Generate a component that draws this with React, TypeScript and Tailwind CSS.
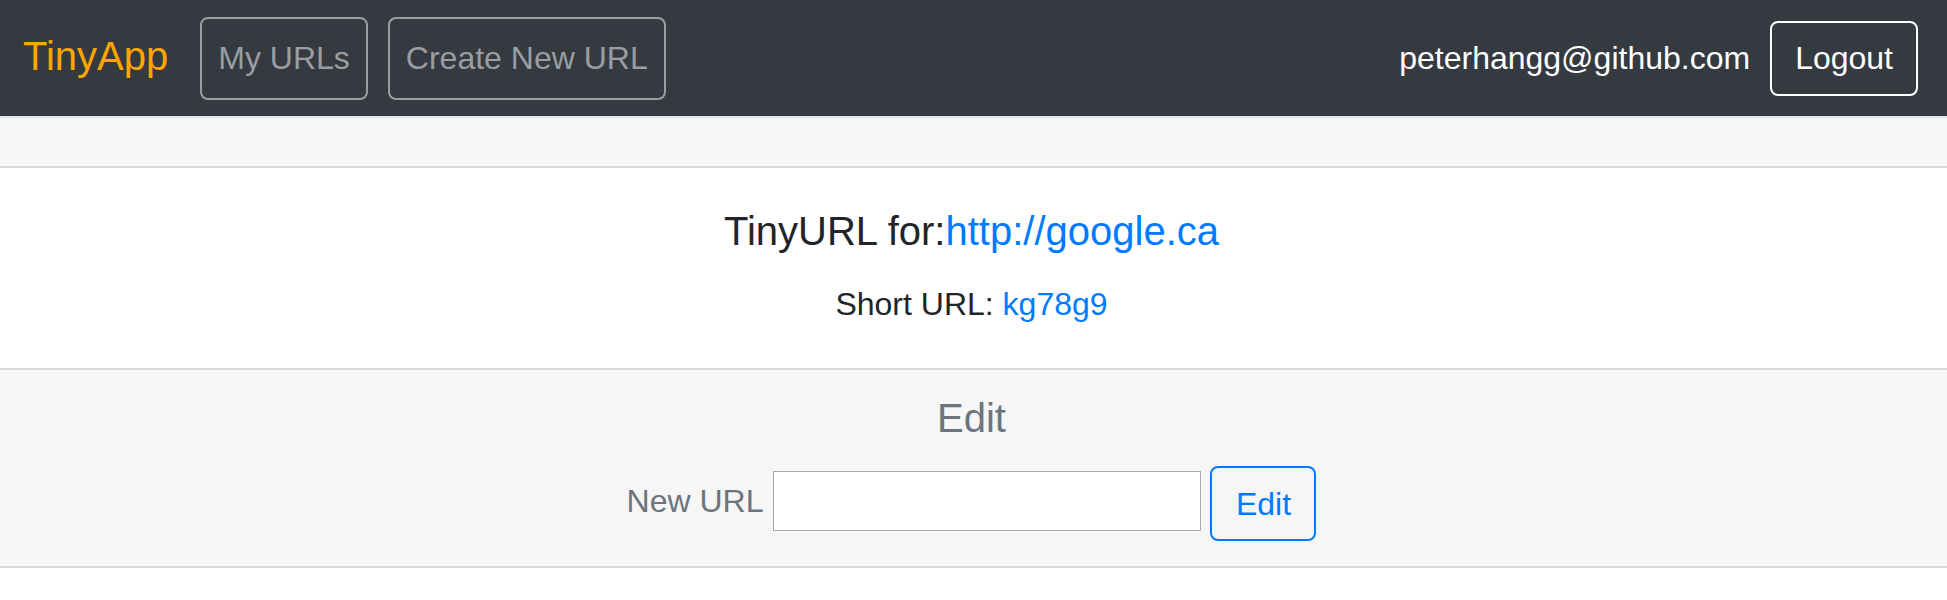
import React from 'react';

const font = { fontFamily: '"Liberation Sans", Arial, sans-serif' };

function NavBar() {
  return (
    <nav className="flex h-[116px] items-center bg-[#343a40] pl-[23px] pr-[29px]">
      <a href="#" className="mb-[5px] mr-[32px] text-[40px] leading-[60px] text-[#ffa500]">
        TinyApp
      </a>
      <div className="flex items-center gap-[20px]">
        <a
          href="#"
          className="flex h-[83px] items-center rounded-lg border-2 border-[#9a9ea2] px-4 text-[32px] leading-[48px] text-[#9a9ea3]"
        >
          My URLs
        </a>
        <a
          href="#"
          className="flex h-[83px] items-center rounded-lg border-2 border-[#9a9ea2] px-4 text-[32px] leading-[48px] text-[#9a9ea3]"
        >
          Create New URL
        </a>
      </div>
      <div className="ml-auto flex items-center gap-[20px]">
        <span className="text-[32px] leading-[48px] text-white">peterhangg@github.com</span>
        <button className="flex h-[75px] items-center rounded-lg border-2 border-white px-[23px] text-[32px] leading-[48px] text-white">
          Logout
        </button>
      </div>
    </nav>
  );
}

export default function App() {
  return (
    <div className="min-h-[600px] bg-white" style={font}>
      <NavBar />
      <div className="h-[52px] border-t-2 border-b-2 border-t-[#e3e3e3] border-b-[#d8d8d8] bg-[#f6f6f6]" />

      <section className="flex h-[200px] flex-col items-center pt-[39px] pr-[4px] text-[#212529]">
        <h5 className="mb-[25px] text-[40px] leading-[48px]">
          TinyURL for:<a href="#" className="text-[#007bff]">http://google.ca</a>
        </h5>
        <p className="text-[32px] leading-[48px]">
          Short URL: <a href="#" className="text-[#007bff]">kg78g9</a>
        </p>
      </section>

      <section className="flex h-[200px] flex-col items-center border-t-2 border-b-2 border-[#d8d8d8] bg-[#f6f6f6] pt-6 pr-[4px]">
        <h3 className="mb-[24px] text-[40px] leading-[48px] text-[#6c757d]">Edit</h3>
        <form className="flex items-center" onSubmit={(e) => e.preventDefault()}>
          <label className="mb-[6px] mr-[10px] text-[32px] leading-[48px] text-[#6c757d]">New URL</label>
          <input
            type="text"
            className="mb-[6px] mr-[9px] h-[60px] w-[428px] border border-[#a9a9a9] bg-white px-2 text-[32px] outline-none"
          />
          <button
            type="submit"
            className="flex h-[75px] w-[106px] items-center justify-center rounded-lg border-2 border-[#007bff] text-[32px] leading-[48px] text-[#007bff]"
          >
            Edit
          </button>
        </form>
      </section>
    </div>
  );
}
